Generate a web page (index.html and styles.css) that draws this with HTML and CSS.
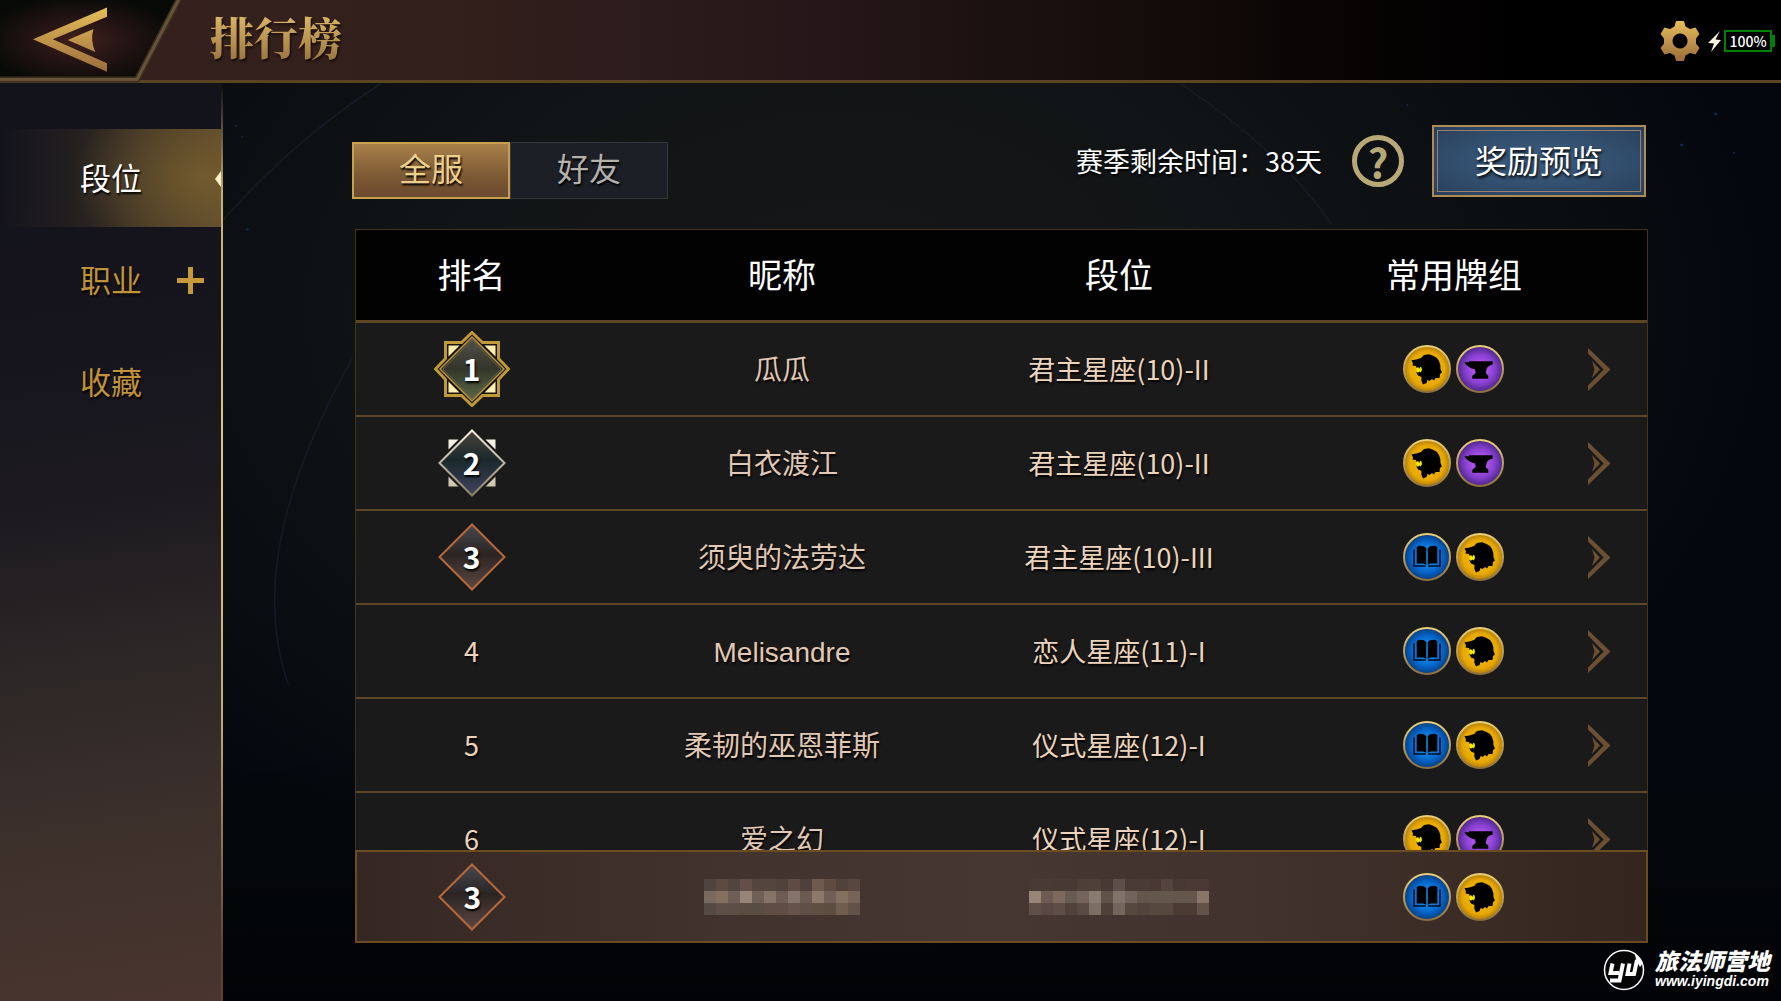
FILE: index.html
```html
<!DOCTYPE html>
<html lang="zh-CN">
<head>
<meta charset="utf-8">
<title>排行榜</title>
<link rel="stylesheet" href="styles.css">
</head>
<body>
<svg class="defs" aria-hidden="true">
  <defs>
    <linearGradient id="gold" x1="0" y1="0" x2="0" y2="1"><stop offset="0" stop-color="#e6be5a"/><stop offset="1" stop-color="#9a6c3c"/></linearGradient>
    <linearGradient id="rim" x1="0" y1="0" x2="0" y2="1"><stop offset="0" stop-color="#e9cf77"/><stop offset="1" stop-color="#8d7040"/></linearGradient>
    <radialGradient id="yellow"><stop offset="0.3" stop-color="#f0b800"/><stop offset="0.75" stop-color="#e8a804"/><stop offset="1" stop-color="#b07c08"/></radialGradient>
    <radialGradient id="purple"><stop offset="0.1" stop-color="#c85cff"/><stop offset="0.65" stop-color="#8440cc"/><stop offset="1" stop-color="#4c2488"/></radialGradient>
    <radialGradient id="blue"><stop offset="0.1" stop-color="#10a0ff"/><stop offset="0.65" stop-color="#0868cc"/><stop offset="1" stop-color="#043c80"/></radialGradient>
    <linearGradient id="face1" x1="0" y1="0" x2="0" y2="1"><stop offset="0" stop-color="#54504c"/><stop offset="0.5" stop-color="#33352a"/><stop offset="1" stop-color="#5a6a4a"/></linearGradient>
    <linearGradient id="face2" x1="0" y1="0" x2="0" y2="1"><stop offset="0" stop-color="#4a443a"/><stop offset="0.45" stop-color="#1a282c"/><stop offset="1" stop-color="#404460"/></linearGradient>
    <linearGradient id="face3" x1="0" y1="0" x2="0" y2="1"><stop offset="0" stop-color="#484a50"/><stop offset="0.45" stop-color="#2b2423"/><stop offset="1" stop-color="#5c4842"/></linearGradient>
    <linearGradient id="edge2" x1="0" y1="0" x2="0" y2="1"><stop offset="0" stop-color="#f4ecdc"/><stop offset="1" stop-color="#8a7c64"/></linearGradient>
    <radialGradient id="leather" cx="0.45" cy="0.5" r="0.55"><stop offset="0" stop-color="#40201c"/><stop offset="0.5" stop-color="#231413"/><stop offset="1" stop-color="#080a08"/></radialGradient>
  </defs>
  <symbol id="lion" viewBox="0 0 48 48">
    <circle cx="24" cy="24" r="23" fill="url(#yellow)" stroke="url(#rim)" stroke-width="2"/>
    <path d="M13 20.500l6 1v7l-5 0.500z" fill="#f4ec00"/>
    <path d="M8.500 15.300L13.500 14.500L18 13L21 10L26 9.300L30 10.700L34 13L36 16L37.300 20L37.500 24L38.900 27.500L37 29L36.500 33L32.500 33L31 35.500L29 34L26.500 36L24.500 35L23.500 38L20 39.500L18.300 35.500L18.500 32L15 30.500L13 26.500L15 27.800L16.500 26.500L17.800 27.500L19 25L18.500 22.500L17 21.800L16.500 24L15 22L13.500 23L13 21L9.500 20.500L10 18.500z"/>
  </symbol>
  <symbol id="anvil" viewBox="0 0 48 48">
    <circle cx="24" cy="24" r="23" fill="url(#purple)" stroke="url(#rim)" stroke-width="2"/>
    <path d="M8.300 17.300H13V16.300H36.700V19.500Q31 21 30.700 24L29.700 28L32.300 30.700V33.700H16.300V30.700L19.700 28L19 24.500Q12 23 8.300 17.300z"/>
  </symbol>
  <symbol id="book" viewBox="0 0 48 48">
    <circle cx="24" cy="24" r="23" fill="url(#blue)" stroke="url(#rim)" stroke-width="2"/>
    <path d="M13.700 14.300L16 12.700L21 13.300L23.300 15.300V32L20.300 30.500H13.700zM34.300 14.300L32 12.700L27 13.300L24.700 15.300V32L27.700 30.500H34.300z"/>
    <path d="M11 16.500V33H22V34M37 16.500V33H26V34" fill="none" stroke="#020a1c" stroke-width="1.500"/>
  </symbol>
  <symbol id="chevron" viewBox="0 0 23 43">
    <path d="M0 0L22.500 21.500L0 43V37.500L15.700 21.500L0 5.500zM4 13L12 21.500L4 30L6.500 21.500z" fill="#6b5033"/>
  </symbol>
  <symbol id="badge1" viewBox="0 0 76 76">
    <path d="M38 1.500L48.500 11.500H64.500V27.500L74.500 38L64.500 48.500V64.500H48.500L38 74.500L27.500 64.500H11.500V48.500L1.500 38L11.500 27.500V11.500H27.500z" fill="#17150c" stroke="#c09a38" stroke-width="3"/>
    <path d="M14.500 14.500h11l-11 11zM61.500 14.500h-11l11 11zM14.500 61.500h11l-11-11zM61.500 61.500h-11l11-11z" fill="#ffedb0"/>
    <path d="M38 6L70 38L38 70L6 38z" fill="url(#face1)" stroke="#b8923c" stroke-width="1.500"/>
    <path d="M38 9L67 38L38 67L9 38z" fill="none" stroke="#6a5c34"/>
  </symbol>
  <symbol id="badge2" viewBox="0 0 76 76">
    <path d="M14.500 14.500h10l-10 10zM61.500 14.500h-10l10 10z" fill="#f4f0e4"/>
    <path d="M14.500 61.500h10l-10-10zM61.500 61.500h-10l10-10z" fill="#cfc8b0"/>
    <path d="M38 5.500L70.500 38L38 70.500L5.500 38z" fill="url(#face2)" stroke="url(#edge2)" stroke-width="2"/>
  </symbol>
  <symbol id="badge3" viewBox="0 0 76 76">
    <path d="M38 5.500L70.500 38L38 70.500L5.500 38z" fill="url(#face3)" stroke="#b8683a" stroke-width="2"/>
  </symbol>
</svg>

<header class="topbar">
  <button class="back" type="button" aria-label="返回">
    <svg width="184" height="83" viewBox="0 0 184 83">
      <path d="M0 0H178L136 81H0z" fill="url(#leather)"/>
      <path d="M0 79.500H137L179 -1" fill="none" stroke="#3c301c" stroke-width="6"/>
      <path d="M0 79.500H137L179 -1" fill="none" stroke="#66533a" stroke-width="3"/>
      <path d="M107 7.500L33 39.300L107 71.700V63.300L52.700 39.300L107 16.700zM93.500 29L67.700 40L95.300 52Q90 40 93.500 29z" fill="url(#gold)"/>
    </svg>
  </button>
  <h1 class="title">排行榜</h1>
  <div class="status">
    <button class="gear" type="button" aria-label="设置">
      <svg width="40" height="42" viewBox="0 0 40 42">
        <path fill="url(#gold)" fill-rule="evenodd" d="M16 1H24L25.500 6.500L30 9L35.500 7.500L39.500 14L36 18.500V23.500L39.500 28L35.500 34.500L30 33L25.500 35.500L24 41H16L14.500 35.500L10 33L4.500 34.500L0.500 28L4 23.500V18.500L0.500 14L4.500 7.500L10 9L14.500 6.500zM20 13.500a7.500 7.500 0 1 0 0.100 0z"/>
      </svg>
    </button>
    <svg class="bolt" width="13" height="21" viewBox="0 0 13 21"><path d="M12 0L0 12L6 12.500L3 21L13 9L7.500 8.500z" fill="#fff3e4"/></svg>
    <span class="battery">100%</span>
  </div>
</header>

<div class="layout">
  <nav class="sidebar">
    <a class="nav-item active" href="#rank">段位</a>
    <a class="nav-item" href="#class">职业<svg class="plus" width="27" height="27" viewBox="0 0 27 27"><path d="M0 13.500H27M13.500 0V27" stroke="#c69a3c" stroke-width="5"/></svg></a>
    <a class="nav-item" href="#collection">收藏</a>
  </nav>

  <main class="content">
    <svg class="sky" viewBox="0 0 1558 917" preserveAspectRatio="xMidYMin slice" aria-hidden="true">
      <g fill="none" stroke="#1b2333" stroke-width="1.500" opacity="0.6">
        <path d="M0 138Q70 58 158 1M130 275Q20 470 66 600M958 1Q1060 70 1108 141"/>
      </g>
      <g fill="#16284a"><circle cx="1184" cy="22" r="1"/><circle cx="1492" cy="31" r="1.500"/><circle cx="1458" cy="62" r="1.500"/><circle cx="1510" cy="70" r="1"/><circle cx="14" cy="43" r="1"/><circle cx="20" cy="54" r="1"/><circle cx="25" cy="146" r="1.500"/></g>
    </svg>
    <div class="toolbar">
      <div class="tabs">
        <button class="tab selected" type="button">全服</button>
        <button class="tab" type="button">好友</button>
      </div>
      <div class="season">
        <span class="remaining">赛季剩余时间：38天</span>
        <button class="help" type="button" aria-label="帮助">?</button>
        <button class="reward" type="button">奖励预览</button>
      </div>
    </div>

    <section class="board">
      <div class="scroll">
        <table>
          <colgroup><col class="c-rank"><col class="c-name"><col class="c-tier"><col class="c-deck"></colgroup>
          <thead><tr><th>排名</th><th>昵称</th><th>段位</th><th>常用牌组</th></tr></thead>
          <tbody>
            <tr><td><span class="badge"><svg><use href="#badge1"/></svg><b>1</b></span></td><td class="name">瓜瓜</td><td>君主星座(10)-II</td><td><div class="decks"><svg><use href="#lion"/></svg><svg><use href="#anvil"/></svg><svg class="go"><use href="#chevron"/></svg></div></td></tr>
            <tr><td><span class="badge"><svg><use href="#badge2"/></svg><b>2</b></span></td><td class="name">白衣渡江</td><td>君主星座(10)-II</td><td><div class="decks"><svg><use href="#lion"/></svg><svg><use href="#anvil"/></svg><svg class="go"><use href="#chevron"/></svg></div></td></tr>
            <tr><td><span class="badge"><svg><use href="#badge3"/></svg><b>3</b></span></td><td class="name">须臾的法劳达</td><td>君主星座(10)-III</td><td><div class="decks"><svg><use href="#book"/></svg><svg><use href="#lion"/></svg><svg class="go"><use href="#chevron"/></svg></div></td></tr>
            <tr><td>4</td><td class="name">Melisandre</td><td>恋人星座(11)-I</td><td><div class="decks"><svg><use href="#book"/></svg><svg><use href="#lion"/></svg><svg class="go"><use href="#chevron"/></svg></div></td></tr>
            <tr><td>5</td><td class="name">柔韧的巫恩菲斯</td><td>仪式星座(12)-I</td><td><div class="decks"><svg><use href="#book"/></svg><svg><use href="#lion"/></svg><svg class="go"><use href="#chevron"/></svg></div></td></tr>
            <tr><td>6</td><td class="name">爱之幻</td><td>仪式星座(12)-I</td><td><div class="decks"><svg><use href="#lion"/></svg><svg><use href="#anvil"/></svg><svg class="go"><use href="#chevron"/></svg></div></td></tr>
          </tbody>
        </table>
      </div>
      <table class="own">
        <colgroup><col class="c-rank"><col class="c-name"><col class="c-tier"><col class="c-deck"></colgroup>
        <tbody>
          <tr>
            <td><span class="badge"><svg><use href="#badge3"/></svg><b>3</b></span></td>
            <td>
              <svg class="mosaic" width="156" height="36" viewBox="0 0 13 3" role="img" aria-label="昵称已隐藏">
                <g><rect x="0" fill="#50443e"/><rect x="1" fill="#5c4a43"/><rect x="2" fill="#52443e"/><rect x="3" fill="#624f47"/><rect x="4" fill="#54453f"/><rect x="5" fill="#54453f"/><rect x="6" fill="#50413b"/><rect x="7" fill="#5e4b44"/><rect x="8" fill="#50403b"/><rect x="9" fill="#6f5a50"/><rect x="10" fill="#5f4b42"/><rect x="11" fill="#52423c"/><rect x="12" fill="#574740"/></g>
                <g><rect x="0" y="1" fill="#7a695e"/><rect x="1" y="1" fill="#84705f"/><rect x="2" y="1" fill="#6e5e55"/><rect x="3" y="1" fill="#958477"/><rect x="4" y="1" fill="#6f6057"/><rect x="5" y="1" fill="#857467"/><rect x="6" y="1" fill="#6c5c53"/><rect x="7" y="1" fill="#85746a"/><rect x="8" y="1" fill="#6a5a51"/><rect x="9" y="1" fill="#8c796b"/><rect x="10" y="1" fill="#6f5f55"/><rect x="11" y="1" fill="#83715f"/><rect x="12" y="1" fill="#76645a"/></g>
                <g><rect x="0" y="2" fill="#554a43"/><rect x="1" y="2" fill="#5e5049"/><rect x="2" y="2" fill="#5c4f45"/><rect x="3" y="2" fill="#594c42"/><rect x="4" y="2" fill="#594c42"/><rect x="5" y="2" fill="#604e45"/><rect x="6" y="2" fill="#5f4e44"/><rect x="7" y="2" fill="#66534c"/><rect x="8" y="2" fill="#604f49"/><rect x="9" y="2" fill="#5f4e42"/><rect x="10" y="2" fill="#5c4c42"/><rect x="11" y="2" fill="#705d4f"/><rect x="12" y="2" fill="#62524a"/></g>
              </svg>
            </td>
            <td>
              <svg class="mosaic" width="180" height="36" viewBox="0 0 15 3" role="img" aria-label="段位已隐藏">
                <g><rect x="0" fill="#4a3a36"/><rect x="1" fill="#4a3a36"/><rect x="2" fill="#493935"/><rect x="3" fill="#493935"/><rect x="4" fill="#4f3f39"/><rect x="5" fill="#4f403a"/><rect x="6" fill="#493935"/><rect x="7" fill="#5e4f48"/><rect x="8" fill="#4b3b36"/><rect x="9" fill="#4b3b36"/><rect x="10" fill="#493934"/><rect x="11" fill="#54443d"/><rect x="12" fill="#483834"/><rect x="13" fill="#4a3934"/><rect x="14" fill="#4a3934"/></g>
                <g><rect x="0" y="1" fill="#978577"/><rect x="1" y="1" fill="#6b5b53"/><rect x="2" y="1" fill="#7d695e"/><rect x="3" y="1" fill="#675b53"/><rect x="4" y="1" fill="#75645b"/><rect x="5" y="1" fill="#887b70"/><rect x="6" y="1" fill="#605149"/><rect x="7" y="1" fill="#80746a"/><rect x="8" y="1" fill="#72645c"/><rect x="9" y="1" fill="#63564d"/><rect x="10" y="1" fill="#64584c"/><rect x="11" y="1" fill="#64584c"/><rect x="12" y="1" fill="#65564c"/><rect x="13" y="1" fill="#65564c"/><rect x="14" y="1" fill="#887468"/></g>
                <g><rect x="0" y="2" fill="#604f49"/><rect x="1" y="2" fill="#584742"/><rect x="2" y="2" fill="#5e4c47"/><rect x="3" y="2" fill="#51423c"/><rect x="4" y="2" fill="#594b43"/><rect x="5" y="2" fill="#7b6f65"/><rect x="6" y="2" fill="#4f403a"/><rect x="7" y="2" fill="#73665d"/><rect x="8" y="2" fill="#56473f"/><rect x="9" y="2" fill="#52433c"/><rect x="10" y="2" fill="#57483f"/><rect x="11" y="2" fill="#57483f"/><rect x="12" y="2" fill="#4b3b34"/><rect x="13" y="2" fill="#4b3b34"/><rect x="14" y="2" fill="#625249"/></g>
              </svg>
            </td>
            <td><div class="decks"><svg><use href="#book"/></svg><svg><use href="#lion"/></svg></div></td>
          </tr>
        </tbody>
      </table>
    </section>
  </main>
</div>

<footer class="watermark">
  <svg width="42" height="42" viewBox="0 0 42 42">
    <circle cx="21" cy="21" r="19.500" fill="#050505" stroke="#fff" stroke-width="1.500"/>
    <path d="M9.500 14.500L7.500 24H16M20 14.500L16.500 31.500H7M26.500 14.500L24.500 25H31L34 11" fill="none" stroke="#fff" stroke-width="4"/>
    <path d="M31.500 4L40 14L37 18L33.500 12z" fill="#fff"/>
  </svg>
  <div class="brand">
    <span class="brand-name">旅法师营地</span>
    <span class="brand-url">www.iyingdi.com</span>
  </div>
</footer>
</body>
</html>
```
FILE: styles.css
```css
* { box-sizing: border-box; }

body {
  margin: 0;
  height: 100vh;
  display: flex;
  flex-direction: column;
  overflow: hidden;
  background: #06080a;
  color: #fff;
  font-family: "Noto Sans CJK SC", "Noto Sans", sans-serif;
}

button {
  border: 0;
  padding: 0;
  background: none;
  color: inherit;
  font: inherit;
  cursor: pointer;
}

svg { display: block; }

.defs { position: absolute; width: 0; height: 0; }

/* top bar */
.topbar {
  flex: none;
  display: flex;
  align-items: center;
  height: 83px;
  border-bottom: 3px solid #5a4422;
  background: linear-gradient(90deg, #35201c 0%, #33201c 25%, #26171a 45%, #170e0c 62%, #050202 78%, #000 88%);
}

.back { align-self: flex-start; }

.title {
  align-self: flex-start;
  margin: 0 auto 0 26px;
  font: 900 44px/72px "Noto Serif CJK SC", "Noto Sans CJK SC", serif;
  background: linear-gradient(#dcb866 20%, #9a7440 85%);
  background-clip: text;
  -webkit-background-clip: text;
  color: transparent;
  filter: drop-shadow(1px 2px 1px #120a08);
}

.status {
  display: flex;
  align-items: center;
  margin-right: 9px;
  padding-top: 2px;
}

.bolt { margin: 0 3px 0 8px; }

.battery {
  position: relative;
  width: 48px;
  height: 22px;
  border: 2px solid #008000;
  font: 500 14px/18px "Noto Sans CJK SC", sans-serif;
  text-align: center;
}

.battery::after {
  content: "";
  position: absolute;
  left: 46px;
  top: 3px;
  width: 3px;
  height: 12px;
  background: #008000;
}

/* page body */
.layout {
  flex: 1;
  min-height: 0;
  display: flex;
}

.sidebar {
  flex: none;
  display: flex;
  flex-direction: column;
  gap: 4px;
  width: 223px;
  padding-top: 46px;
  border-right: 2px solid;
  border-image: linear-gradient(#0a0d10, #c9b06c 12%, #e4c878 45%, #c4a860 70%, #5c4030 95%) 1;
  background: linear-gradient(172deg, #13131c 0%, #16151e 30%, #1d1b20 46%, #2d2727 63%, #3c302b 80%, #4a352f 100%);
}

.nav-item {
  position: relative;
  height: 98px;
  padding-left: 80px;
  color: #c0923a;
  font-size: 31px;
  line-height: 96px;
  text-decoration: none;
  text-shadow: 1px 2px 2px #000;
}

.nav-item.active {
  color: #fff;
  background:
    radial-gradient(ellipse 130px 90px at 92% 50%, rgba(128, 100, 48, 0.7), transparent),
    linear-gradient(90deg, transparent, #211e1f 30%, #3f3426 65%, #57472a);
}

.nav-item.active::after {
  content: "";
  position: absolute;
  right: 0;
  top: 42px;
  width: 6px;
  height: 16px;
  background: #fff0c8;
  clip-path: polygon(100% 0, 0 50%, 100% 100%);
}

.plus {
  position: absolute;
  left: 177px;
  top: 36px;
}

.content {
  position: relative;
  flex: 1;
  min-width: 0;
  display: flex;
  flex-direction: column;
  padding: 42px 133px 58px 129px;
  background:
    linear-gradient(180deg, transparent 70%, rgba(0, 0, 0, 0.6) 100%),
    radial-gradient(ellipse 60% 70% at 40% 25%, #171717 0%, #111416 45%, #0a0e12 75%, #04080e 100%);
}

.sky {
  position: absolute;
  inset: 0;
  width: 100%;
  height: 100%;
}

.toolbar {
  position: relative;
  display: flex;
  justify-content: space-between;
  height: 74px;
  margin: 0 2px 30px 0;
}

.tabs {
  display: flex;
  align-self: flex-end;
}

.tab {
  width: 158px;
  height: 57px;
  padding-bottom: 8px;
  border: 1px solid #34383c;
  background: #1c1f26;
  color: #b4b0ac;
  font-size: 32px;
  line-height: 44px;
  text-shadow: 1px 2px 2px #000;
}

.tab.selected {
  border: 2px solid #c8a04c;
  background: linear-gradient(#a8804a, #7c5a34 60%, #6b4830);
  color: #ead08c;
}

.season {
  display: flex;
  align-items: center;
  height: 72px;
}

.remaining {
  font-size: 27px;
  line-height: 40px;
  text-shadow: 1px 2px 2px #000;
}

.help {
  width: 52px;
  height: 52px;
  margin: 0 28px 0 30px;
  border: 5px solid #b8a878;
  border-radius: 50%;
  color: #b8a878;
  font-size: 40px;
  font-weight: 700;
  line-height: 40px;
}

.reward {
  width: 214px;
  height: 72px;
  padding-bottom: 4px;
  border: 2px solid #b08c54;
  outline: 1px solid #98806c;
  outline-offset: -6px;
  background: radial-gradient(ellipse at center, #3d5d80 0%, #345070 50%, #283f5a 100%);
  font-size: 32px;
  line-height: 60px;
  text-shadow: 1px 2px 3px #000;
}

/* leaderboard */
.board {
  position: relative;
  flex: 1;
  min-height: 0;
  display: flex;
  flex-direction: column;
  margin-left: 3px;
}

.scroll {
  flex: 1;
  min-height: 0;
  overflow: hidden;
  border: 1px solid #42341c;
  border-width: 1px 1px 0;
}

table {
  width: 100%;
  table-layout: fixed;
  border-collapse: separate;
  border-spacing: 0;
}

.c-rank { width: 17.9%; }
.c-name { width: 30.2%; }
.c-tier { width: 22%; }
.c-deck { width: 29.9%; }

th {
  height: 93px;
  padding: 0 0 2px;
  border-bottom: 3px solid #5c4520;
  background: #020202;
  font-size: 34px;
  font-weight: 400;
  line-height: 48px;
}

td {
  height: 94px;
  padding: 0;
  border-bottom: 2px solid #5e4726;
  background: #1b1a1a;
  color: #ecd4bc;
  font-size: 27px;
  line-height: 40px;
  text-align: center;
  text-shadow: 1px 2px 2px #000;
}

td.name {
  padding-top: 4px;
  color: #e0c8b4;
  font-family: "Liberation Sans", "Noto Sans CJK SC", sans-serif;
  font-size: 28px;
}

.badge {
  display: grid;
  place-items: center;
  height: 76px;
}

.badge svg, .badge b { grid-area: 1 / 1; }
.badge svg { width: 76px; height: 76px; }

.badge b {
  position: relative;
  padding-bottom: 2px;
  color: #fff;
  font-size: 30px;
}

.decks {
  display: grid;
  grid-template-columns: 1fr 48px 48px 1fr;
  align-items: center;
  column-gap: 5px;
}

.decks svg { width: 48px; height: 48px; }
.decks svg:first-child { grid-column: 2; }

.decks .go {
  width: 23px;
  height: 43px;
  margin-right: 36px;
  justify-self: end;
}

.own {
  flex: none;
  border: 2px solid #6b4c1e;
  background: linear-gradient(90deg, #352723, #43332f 30%, #463733 50%, #42322d 70%, #34261f);
}

.own td {
  height: 89px;
  border: 0;
  background: none;
}

.mosaic {
  margin: 0 auto;
  shape-rendering: crispEdges;
}

.mosaic rect { width: 1px; height: 1px; }

/* site mark over the lower right corner */
.watermark {
  position: absolute;
  right: 11px;
  bottom: 10px;
  display: flex;
  align-items: center;
  gap: 10px;
}

.brand { display: flex; flex-direction: column; }

.brand-name {
  font-size: 23px;
  font-weight: 900;
  font-style: italic;
  line-height: 22px;
}

.brand-url {
  font: italic 700 14px/20px "Liberation Sans", sans-serif;
}
```
